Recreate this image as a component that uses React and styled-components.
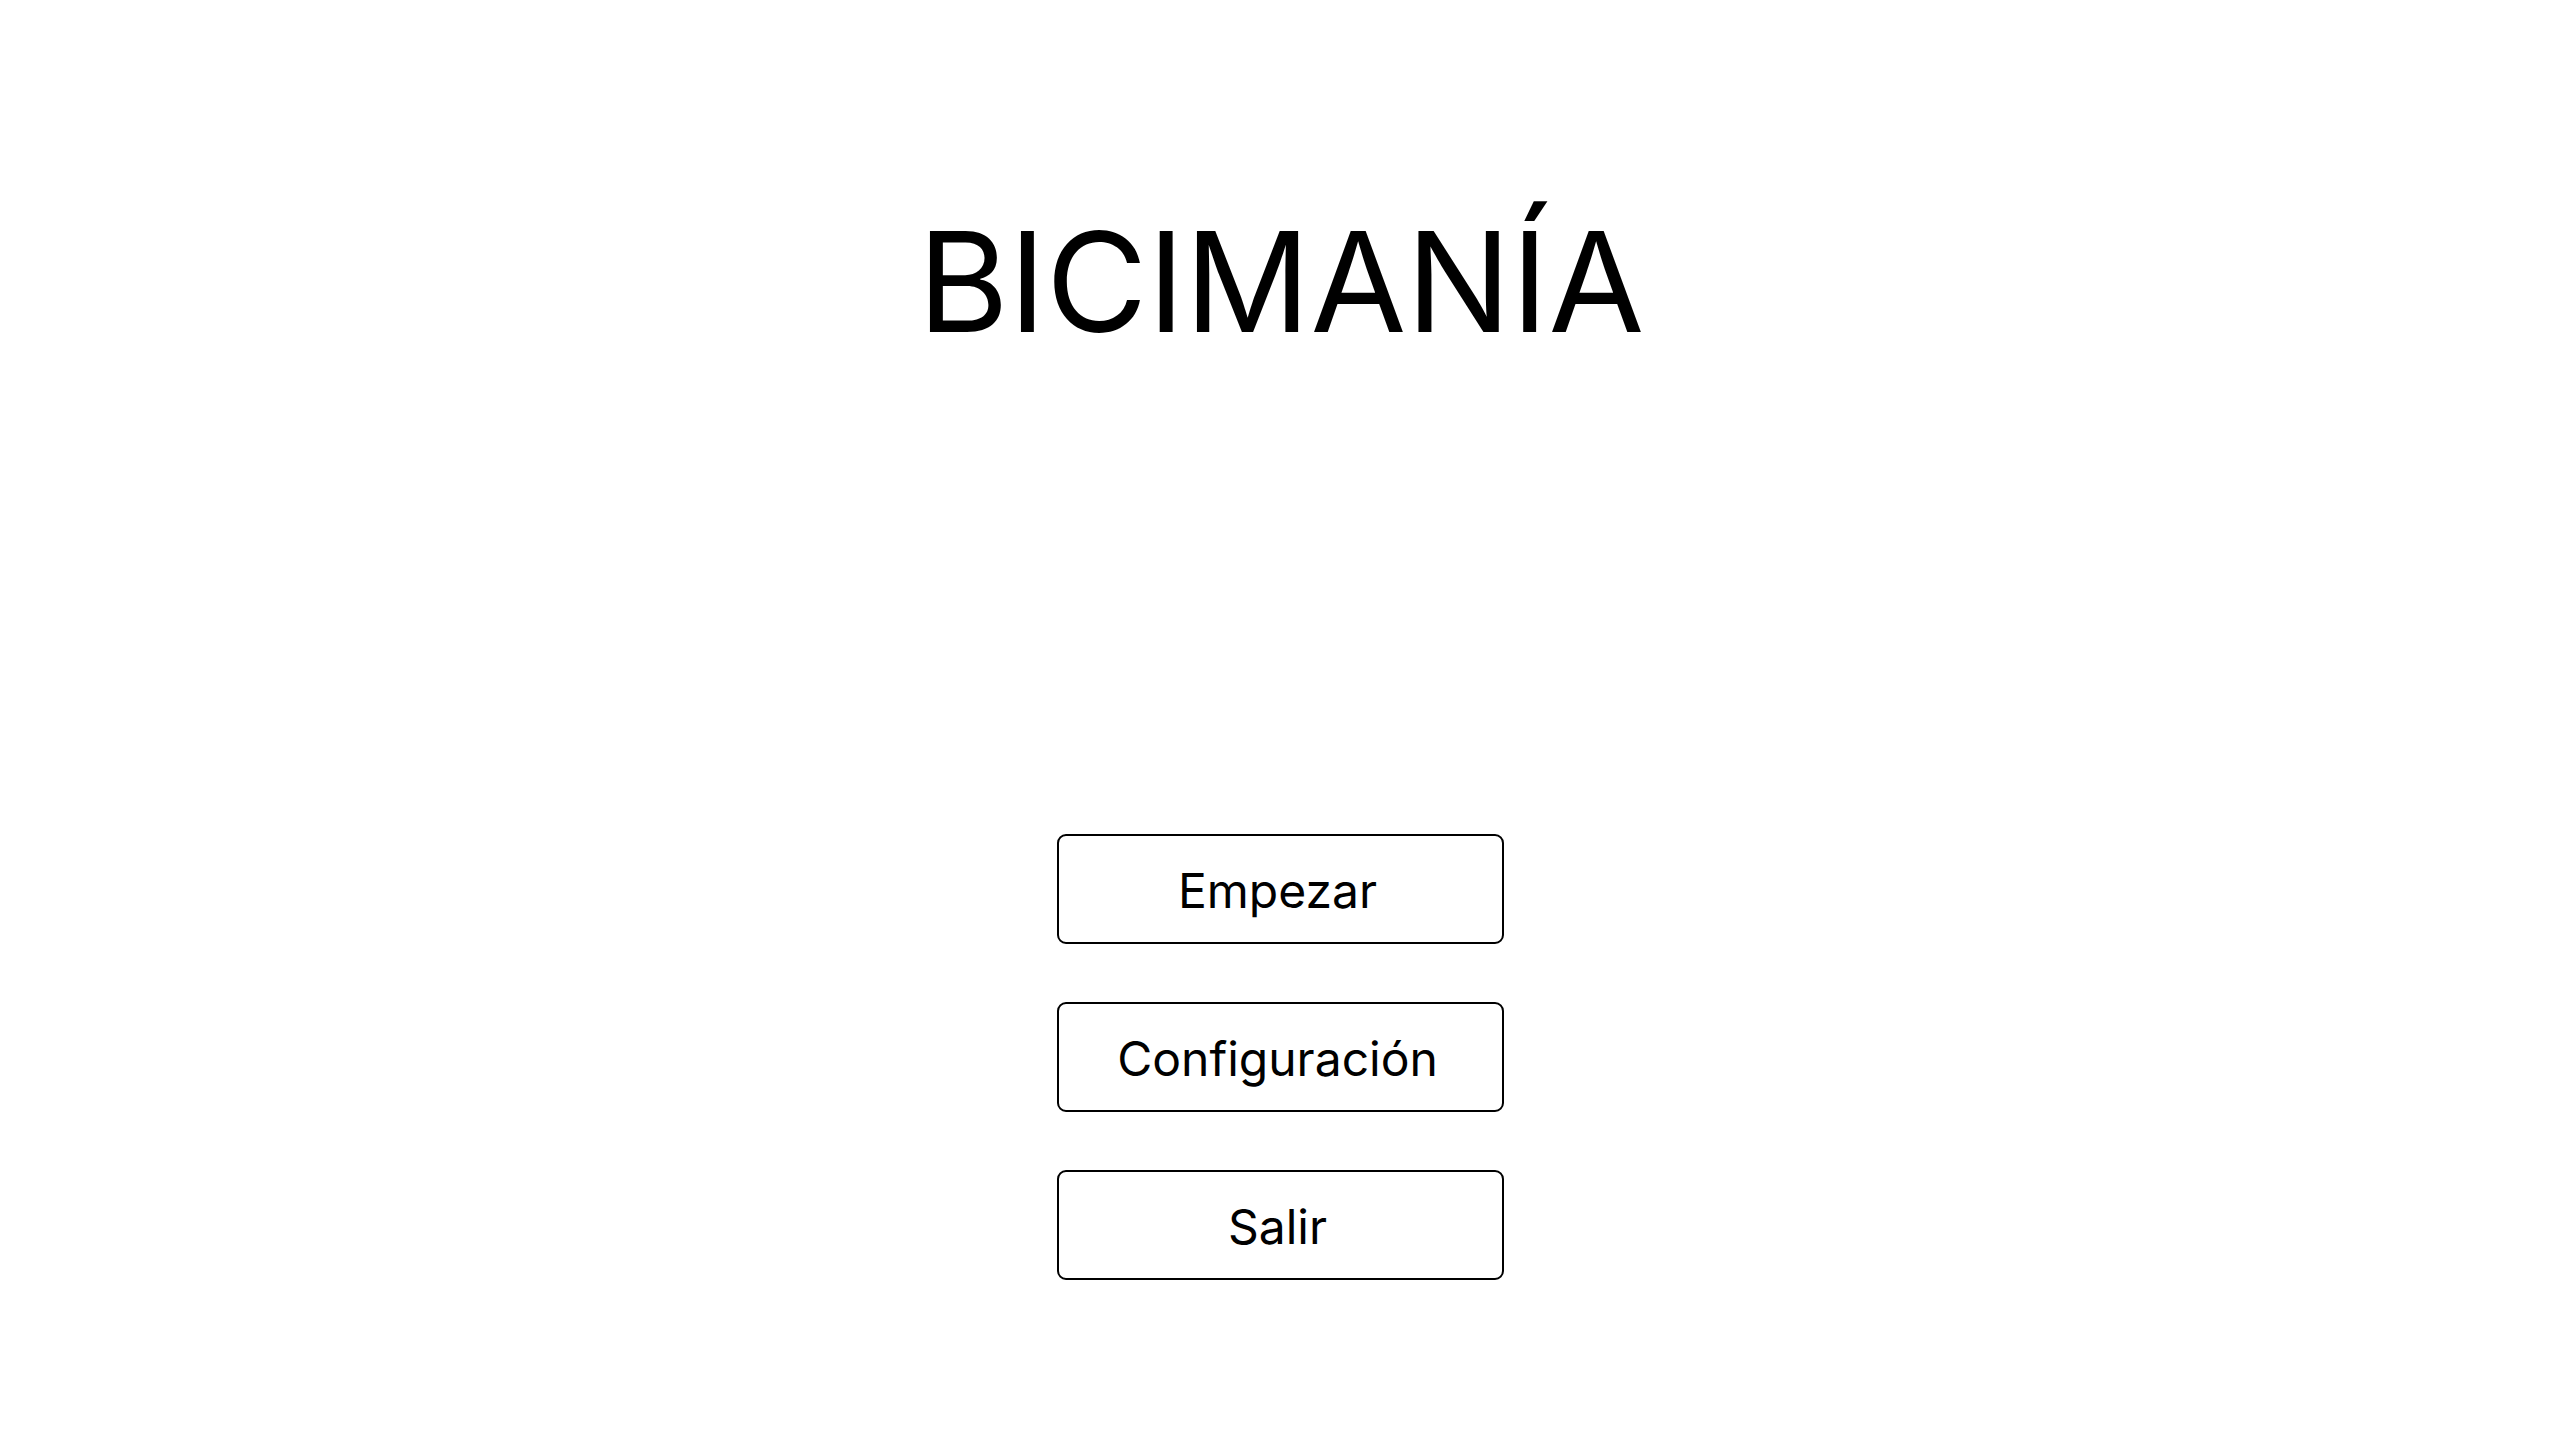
import styled, { createGlobalStyle } from 'styled-components';

const GlobalStyle = createGlobalStyle`
  body {
    margin: 0;
    background: #ffffff;
    font-family: "Inter", "Liberation Sans", sans-serif;
  }
`;

const Screen = styled.div`
  display: flex;
  flex-direction: column;
  align-items: center;
  min-height: 100vh;
  background-color: #ffffff;
`;

const Title = styled.h1`
  margin: 0;
  padding-top: 182px;
  padding-left: 2px;
  font-size: 139px;
  font-weight: 400;
  line-height: 200px;
  color: #000000;
`;

const Menu = styled.nav`
  display: flex;
  flex-direction: column;
  gap: 58px;
  margin-top: 452px;
`;

const MenuButton = styled.button`
  width: 447px;
  height: 110px;
  padding: 3px 5px 0 0;
  background: #ffffff;
  border: 2px solid #000000;
  border-radius: 9px;
  font-family: "Inter", "Liberation Sans", sans-serif;
  font-size: 48px;
  font-weight: 400;
  color: #000000;
  cursor: pointer;
`;

export default function App() {
  return (
    <Screen>
      <GlobalStyle />
      <Title>BICIMANÍA</Title>
      <Menu>
        <MenuButton>Empezar</MenuButton>
        <MenuButton>Configuración</MenuButton>
        <MenuButton>Salir</MenuButton>
      </Menu>
    </Screen>
  );
}
